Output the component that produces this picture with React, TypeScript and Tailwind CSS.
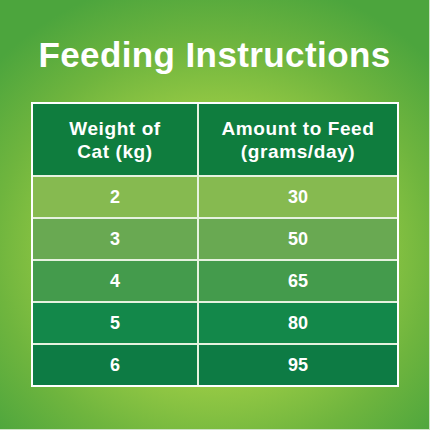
import React from "react";

const rows: { w: string; a: string; bg: string }[] = [
  { w: "2", a: "30", bg: "bg-[#86ba50]" },
  { w: "3", a: "50", bg: "bg-[#69a952]" },
  { w: "4", a: "65", bg: "bg-[#449b4c]" },
  { w: "5", a: "80", bg: "bg-[#13884a]" },
  { w: "6", a: "95", bg: "bg-[#0d7b44]" },
];

export default function App() {
  return (
    <div
      className="w-[430px] h-[430px] overflow-hidden border-r border-b border-[#cfe3c6] bg-[radial-gradient(ellipse_75%_70%_at_50%_58%,#a8d249_0%,#9acc45_42%,#6fb53e_68%,#4ca53d_92%)] font-['Liberation_Sans',Arial,sans-serif] font-bold text-white"
    >
      <h1 className="pt-[35px] h-[75px] text-center text-[35px] leading-[40px] tracking-[0.4px]">
        Feeding Instructions
      </h1>
      <div className="ml-[31px] mt-[27px] w-[368px] border-2 border-white bg-[#e6f2df] grid grid-cols-[164px_198px] gap-[2px]">
        <div className="h-[71px] bg-[#0f7d3e] flex items-center justify-center text-center text-[19px] leading-[23px] tracking-[0.6px]">
          Weight of
          <br />
          Cat (kg)
        </div>
        <div className="h-[71px] bg-[#0f7d3e] flex items-center justify-center text-center text-[19px] leading-[23px] tracking-[0.6px]">
          Amount to Feed
          <br />
          (grams/day)
        </div>
        {rows.map((r) => (
          <React.Fragment key={r.w}>
            <div className={`h-[40px] ${r.bg} flex items-center justify-center text-[18px]`}>
              {r.w}
            </div>
            <div className={`h-[40px] ${r.bg} flex items-center justify-center text-[18px]`}>
              {r.a}
            </div>
          </React.Fragment>
        ))}
      </div>
    </div>
  );
}
